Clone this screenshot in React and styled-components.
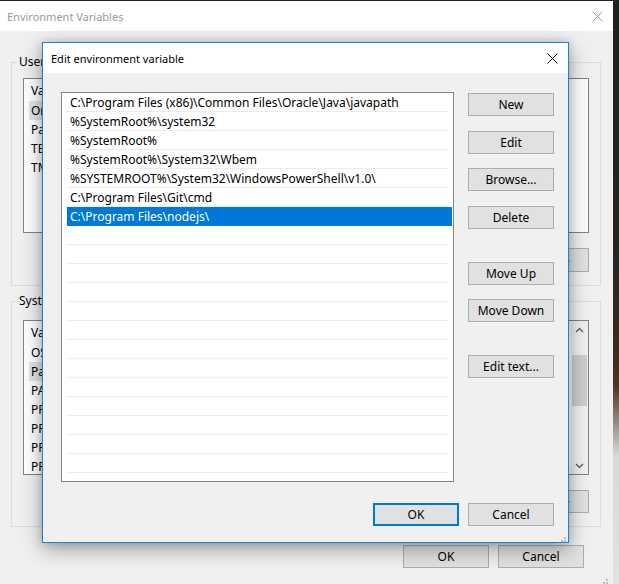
import React from "react";
import styled, { createGlobalStyle } from "styled-components";

const GlobalStyle = createGlobalStyle`
  html, body {
    margin: 0;
    padding: 0;
  }
  body {
    background: #1c1c1c;
    font-family: "Noto Sans", "Segoe UI", sans-serif;
    font-size: 12px;
    color: #000;
  }
`;

const Desktop = styled.div`
  position: relative;
  width: 619px;
  height: 584px;
  overflow: hidden;
  background: linear-gradient(
    180deg,
    #202020 0%,
    #262320 40%,
    #3d2a1e 60%,
    #4a3424 66%,
    #d9d9d9 78%,
    #e2e2e2 100%
  );
`;

const Window = styled.div`
  width: 613px;
  height: 583px;
  margin-top: 1px;
  background: #f0f0f0;
  display: flex;
  flex-direction: column;
`;

const TitleBar = styled.div`
  height: 30px;
  flex-shrink: 0;
  background: #fff;
  display: flex;
  align-items: center;
  justify-content: space-between;
  padding: 0 ${(p) => p.$padRight}px 0 ${(p) => p.$padLeft}px;
  color: ${(p) => (p.$active ? "#000" : "#9a9a9a")};
  font-size: 11px;
`;

const CloseX = ({ color }) => (
  <svg width="11" height="11" viewBox="0 0 11 11">
    <path d="M0.5 0.5 L10.5 10.5 M10.5 0.5 L0.5 10.5" stroke={color} strokeWidth="1" />
  </svg>
);

const WindowBody = styled.div`
  padding: 23px 12px 0 11px;
  display: flex;
  flex-direction: column;
`;

const Group = styled.fieldset`
  margin: ${(p) => p.$top}px 0 0 0;
  padding: 0 11px ${(p) => p.$bottom}px 11px;
  border: 1px solid #dcdcdc;
  min-width: 0;
`;

const Legend = styled.legend`
  padding: 0 2px;
  margin-left: -6px;
  line-height: 16px;
  font-size: 12px;
`;

const BgList = styled.div`
  margin-top: ${(p) => p.$top}px;
  height: 155px;
  box-sizing: border-box;
  border: 1px solid #828282;
  background: #fff;
  position: relative;
  overflow: hidden;
`;

const BgHeader = styled.div`
  height: 22px;
  display: flex;
  align-items: center;
  padding-left: 7px;
`;

const BgRow = styled.div`
  height: 19px;
  display: flex;
  align-items: center;
  margin-left: 5px;
  margin-right: 20px;
  padding-left: 2px;
  white-space: nowrap;
  background: ${(p) => (p.$selected ? "#e5e5e5" : "transparent")};
`;

const ScrollBar = styled.div`
  position: absolute;
  top: 0;
  right: 0;
  bottom: 0;
  width: 17px;
  background: #f0f0f0;
  display: flex;
  flex-direction: column;
  align-items: center;
`;

const ScrollArrow = styled.div`
  height: 17px;
  width: 17px;
  display: flex;
  align-items: center;
  justify-content: center;
`;

const ScrollThumb = styled.div`
  width: 15px;
  height: 51px;
  margin-top: 17px;
  background: #cdcdcd;
`;

const ScrollSpacer = styled.div`
  flex: 1;
`;

const Chevron = ({ up }) => (
  <svg width="9" height="6" viewBox="0 0 9 6">
    <path
      d={up ? "M1 5 L4.5 1.5 L8 5" : "M1 1 L4.5 4.5 L8 1"}
      fill="none"
      stroke="#606060"
      strokeWidth="1.4"
    />
  </svg>
);

const ButtonRow = styled.div`
  display: flex;
  justify-content: flex-end;
  gap: ${(p) => p.$gap}px;
  margin-top: ${(p) => p.$top}px;
  padding-right: ${(p) => p.$right || 0}px;
`;

const Button = styled.button`
  box-sizing: border-box;
  width: ${(p) => p.$width || 86}px;
  height: ${(p) => p.$height || 23}px;
  margin-top: ${(p) => p.$top || 0}px;
  padding: 0;
  background: #e1e1e1;
  border: ${(p) => (p.$default ? "2px solid #0078d7" : "1px solid #adadad")};
  font-family: inherit;
  font-size: 12px;
  color: #000;
  text-align: center;
  flex-shrink: 0;
`;

const Dialog = styled.div`
  position: absolute;
  left: 42px;
  top: 42px;
  width: 527px;
  height: 501px;
  box-sizing: border-box;
  border: 1px solid #1883d7;
  background: #f0f0f0;
  display: flex;
  flex-direction: column;
  box-shadow: 0 6px 20px rgba(0, 0, 0, 0.35), 0 0 8px rgba(0, 0, 0, 0.15);
`;

const DialogBody = styled.div`
  flex: 1;
  display: flex;
  flex-direction: column;
  padding: 19px 14px 0 18px;
  position: relative;
`;

const MainRow = styled.div`
  display: flex;
  gap: 14px;
`;

const PathList = styled.div`
  width: 393px;
  height: 390px;
  box-sizing: border-box;
  border: 1px solid #828282;
  background: #fff;
  overflow: hidden;
`;

const PathRow = styled.div`
  height: 19px;
  box-sizing: border-box;
  display: flex;
  align-items: center;
  margin: ${(p) => (p.$selected ? "0 1px 0 5px" : "0 4px 0 4px")};
  padding-left: ${(p) => (p.$selected ? 3 : 4)}px;
  padding-top: 1px;
  border-bottom: 1px solid ${(p) => (p.$selected ? "#0078d7" : "#ececec")};
  background: ${(p) => (p.$selected ? "#0078d7" : "#fff")};
  color: ${(p) => (p.$selected ? "#fff" : "#000")};
  white-space: nowrap;
`;

const ButtonColumn = styled.div`
  display: flex;
  flex-direction: column;
`;

const Grip = styled.div`
  position: absolute;
  right: ${(p) => p.$right}px;
  bottom: ${(p) => p.$bottom}px;
  width: 8px;
  height: 8px;
`;

const SizeGrip = ({ right, bottom }) => (
  <Grip $right={right} $bottom={bottom}>
    <svg width="8" height="8" viewBox="0 0 8 8">
      <g fill="#bdbdbd">
        <rect x="6" y="0" width="2" height="2" />
        <rect x="3" y="3" width="2" height="2" />
        <rect x="6" y="3" width="2" height="2" />
        <rect x="0" y="6" width="2" height="2" />
        <rect x="3" y="6" width="2" height="2" />
        <rect x="6" y="6" width="2" height="2" />
      </g>
    </svg>
  </Grip>
);

const paths = [
  "C:\\Program Files (x86)\\Common Files\\Oracle\\Java\\javapath",
  "%SystemRoot%\\system32",
  "%SystemRoot%",
  "%SystemRoot%\\System32\\Wbem",
  "%SYSTEMROOT%\\System32\\WindowsPowerShell\\v1.0\\",
  "C:\\Program Files\\Git\\cmd",
  "C:\\Program Files\\nodejs\\",
];

const userVars = ["OneDrive", "Path", "TEMP", "TMP"];

const systemVars = [
  "OS",
  "Path",
  "PATHEXT",
  "PROCESSOR_ARCHITECTURE",
  "PROCESSOR_IDENTIFIER",
  "PROCESSOR_LEVEL",
  "PROCESSOR_REVISION",
];

// extra space above each button in the side column
const sideButtons = [
  ["New", 1],
  ["Edit", 15],
  ["Browse...", 14],
  ["Delete", 15],
  ["Move Up", 33],
  ["Move Down", 14],
  ["Edit text...", 33],
];

export default function App() {
  const rows = [...paths, ...Array(15).fill("")];

  return (
    <Desktop>
      <GlobalStyle />
      <Window>
        <TitleBar $padLeft={7} $padRight={10}>
          <span>Environment Variables</span>
          <CloseX color="#9a9a9a" />
        </TitleBar>
        <WindowBody>
          <Group $top={0} $bottom={13}>
            <Legend>User variables</Legend>
            <BgList $top={8}>
              <BgHeader>Variable</BgHeader>
              {userVars.map((name, i) => (
                <BgRow key={name} $selected={i === 0}>
                  {name}
                </BgRow>
              ))}
            </BgList>
            <ButtonRow $gap={9} $top={15}>
              <Button $width={75} $height={24}>New...</Button>
              <Button $width={75} $height={24}>Edit...</Button>
              <Button $width={75} $height={24}>Delete</Button>
            </ButtonRow>
          </Group>
          <Group $top={7} $bottom={13}>
            <Legend>System variables</Legend>
            <BgList $top={11}>
              <BgHeader>Variable</BgHeader>
              {systemVars.map((name, i) => (
                <BgRow key={name} $selected={i === 1}>
                  {name}
                </BgRow>
              ))}
              <ScrollBar>
                <ScrollArrow>
                  <Chevron up />
                </ScrollArrow>
                <ScrollThumb />
                <ScrollSpacer />
                <ScrollArrow>
                  <Chevron />
                </ScrollArrow>
              </ScrollBar>
            </BgList>
            <ButtonRow $gap={9} $top={15}>
              <Button $width={75}>New...</Button>
              <Button $width={75}>Edit...</Button>
              <Button $width={75}>Delete</Button>
            </ButtonRow>
          </Group>
          <ButtonRow $gap={9} $top={18} $right={17}>
            <Button>OK</Button>
            <Button>Cancel</Button>
          </ButtonRow>
        </WindowBody>
      </Window>
      <SizeGrip right={11} bottom={2} />

      <Dialog>
        <TitleBar $active $padLeft={8} $padRight={10}>
          <span>Edit environment variable</span>
          <CloseX color="#000" />
        </TitleBar>
        <DialogBody>
          <MainRow>
            <PathList>
              {rows.map((p, i) => (
                <PathRow key={i} $selected={i === 6}>
                  {p}
                </PathRow>
              ))}
            </PathList>
            <ButtonColumn>
              {sideButtons.map(([label, top]) => (
                <Button key={label} $top={top}>
                  {label}
                </Button>
              ))}
            </ButtonColumn>
          </MainRow>
          <ButtonRow $gap={9} $top={21}>
            <Button $default>OK</Button>
            <Button>Cancel</Button>
          </ButtonRow>
          <SizeGrip right={2} bottom={2} />
        </DialogBody>
      </Dialog>
    </Desktop>
  );
}
